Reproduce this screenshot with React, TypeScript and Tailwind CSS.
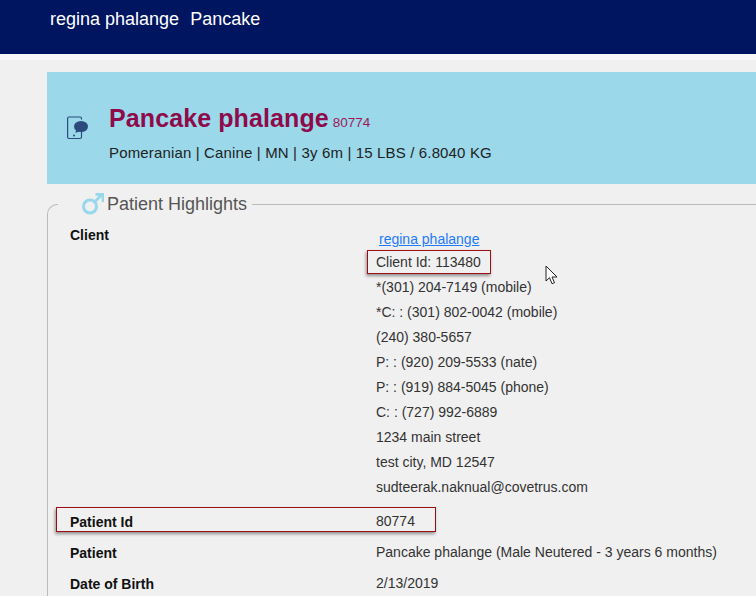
import React from 'react';

const contactLines = [
  '*(301) 204-7149 (mobile)',
  '*C: : (301) 802-0042 (mobile)',
  '(240) 380-5657',
  'P: : (920) 209-5533 (nate)',
  'P: : (919) 884-5045 (phone)',
  'C: : (727) 992-6889',
  '1234 main street',
  'test city, MD 12547',
  'sudteerak.naknual@covetrus.com',
];

const Callout = ({ className }: { className: string }) => (
  <div className={`absolute border border-[#9b0e12] shadow-[-1px_2px_3px_rgba(0,0,0,0.4)] ${className}`} />
);

const PhoneChatIcon = () => (
  <svg width="22" height="24" viewBox="0 0 22 24" className="shrink-0" fill="none">
    <path d="M14.500 3.500V2.500a1.500 1.500 0 0 0-1.500-1.500H2A1.500 1.500 0 0 0 .600 2.500V21A1.500 1.500 0 0 0 2 22.500h11a1.500 1.500 0 0 0 1.500-1.500V15" stroke="#2c4a7c" strokeWidth="1.200" />
    <ellipse cx="14" cy="10.500" rx="7" ry="5.500" fill="#2c4a7c" />
    <path d="M9 14l-.5 3 4-1.800z" fill="#2c4a7c" />
    <circle cx="7" cy="19.500" r="1" fill="#2c4a7c" />
  </svg>
);

const MaleIcon = () => (
  <svg width="24" height="24" viewBox="0 0 24 24" fill="none" className="shrink-0">
    <circle cx="10" cy="14.500" r="6.500" stroke="#97d8ec" strokeWidth="3" />
    <path d="M15 9.500L21.500 3M15.500 2.300H23V10" stroke="#97d8ec" strokeWidth="2.800" />
  </svg>
);

const Row = ({ label, value }: { label: string; value: string }) => (
  <div className="flex h-[31px] items-center">
    <div className="w-[306px] pt-[2px] font-bold text-[14px] text-[#111]">{label}</div>
    <div className="text-[14px] text-[#333]">{value}</div>
  </div>
);

export default function App() {
  return (
    <div className="relative h-[596px] w-[756px] overflow-hidden bg-[#f0f0f0] font-['Liberation_Sans',Arial,sans-serif]">
      <header className="h-[54px] bg-[#001560] pl-[50px] pt-[9px] text-[18px] leading-[21px] text-white">
        <span>regina phalange</span>
        <span className="ml-[11px]">Pancake</span>
      </header>
      <div className="h-[6px] bg-[#f8f8f8]" />

      <main className="w-[800px] pl-[47px] pt-3">
        <section className="flex h-[112px] items-center bg-[#9ad8ea] pl-[20px]">
          <PhoneChatIcon />
          <div className="ml-[20px] pt-[8px]">
            <div className="flex items-baseline">
              <h1 className="text-[25px] font-bold leading-[32px] tracking-[0.1px] text-[#8f0a4a]">Pancake phalange</h1>
              <span className="ml-[4px] text-[13.5px] text-[#a0185a]">80774</span>
            </div>
            <p className="mt-[9px] text-[15px] leading-[20px] tracking-[0.15px] text-[#222]">
              Pomeranian | Canine | MN | 3y 6m | 15 LBS / 6.8040 KG
            </p>
          </div>
        </section>

        <fieldset className="mt-[8px] rounded-tl-[10px] border-l border-t border-[#bbb]">
          <legend className="ml-[10px] flex h-[24px] items-center pl-[22px] pr-[5px] text-[18px] text-[#555]">
            <MaleIcon />
            <span className="ml-[3px]">Patient Highlights</span>
          </legend>

          <div className="pl-[22px]">
            <div className="mt-[9px] flex">
              <div className="w-[306px] text-[14px] font-bold text-[#111]">Client</div>
              <div className="text-[14px] leading-[25px] text-[#333]">
                <a href="#" className="ml-[3px] block h-[25px] pt-[2px] text-[#1e7bff] underline">regina phalange</a>
                <div>Client Id: 113480</div>
                {contactLines.map((line) => (
                  <div key={line}>{line}</div>
                ))}
              </div>
            </div>

            <div className="mt-[6px]">
              <Row label="Patient Id" value="80774" />
              <Row label="Patient" value="Pancake phalange (Male Neutered - 3 years 6 months)" />
              <Row label="Date of Birth" value="2/13/2019" />
            </div>
          </div>
        </fieldset>
      </main>

      <Callout className="left-[367px] top-[250px] h-[24px] w-[124px]" />
      <Callout className="left-[56px] top-[507px] h-[25px] w-[380px]" />

      <svg className="absolute left-[545px] top-[265px]" width="14" height="20" viewBox="0 0 14 20">
        <path d="M1 1v15l3.500-3.300 2.500 6 2.500-1-2.500-5.700H12z" fill="#fff" stroke="#222" strokeWidth="1" />
      </svg>
    </div>
  );
}
